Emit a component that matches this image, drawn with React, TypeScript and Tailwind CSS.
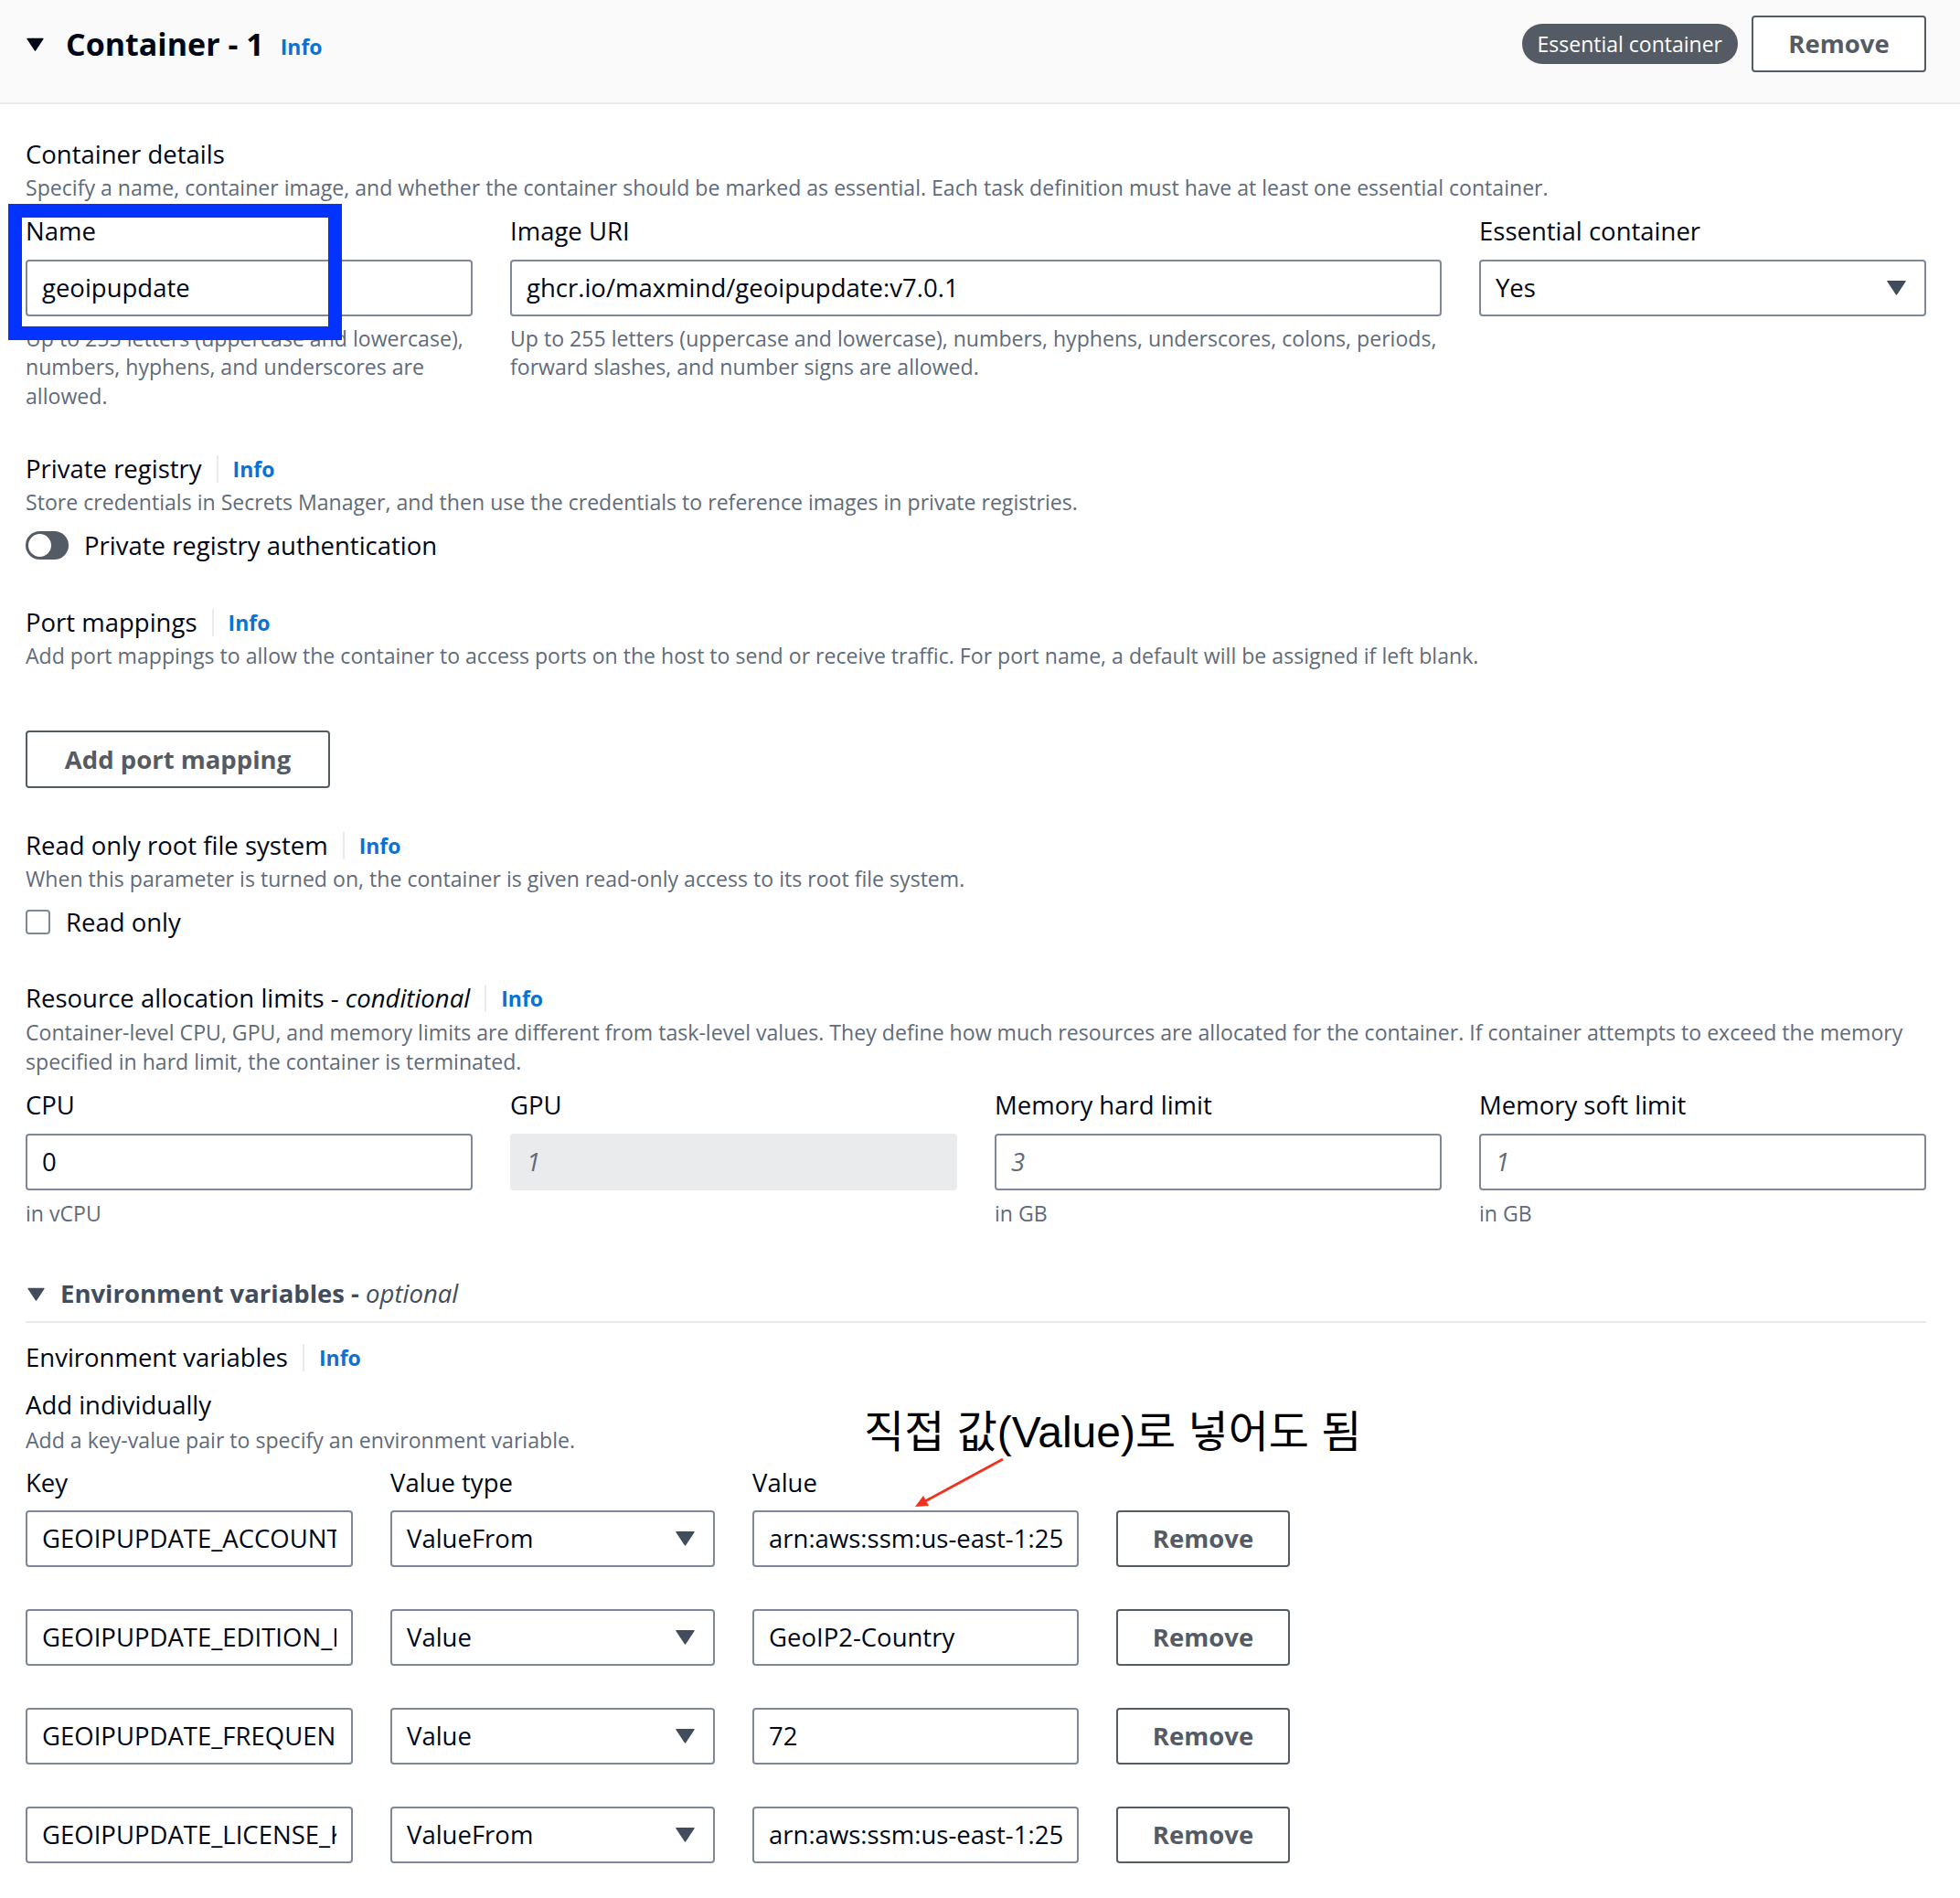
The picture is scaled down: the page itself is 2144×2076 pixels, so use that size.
import { ReactNode } from "react";

const FIELD =
  "h-[62px] w-full rounded-[4px] border-2 border-[#7d8998] bg-white px-[16px] text-[27.5px] text-[#000716] outline-none placeholder:italic placeholder:text-[#5f6b7a]";

const Caret = ({ className }: { className?: string }) => (
  <svg viewBox="0 0 20 16" className={className} fill="currentColor">
    <path d="M1 1.5h18L10 15z" strokeLinejoin="round" stroke="currentColor" strokeWidth="1.5" />
  </svg>
);

const Info = () => (
  <span className="text-[23px] font-bold leading-[42px] text-[#0972d3]">Info</span>
);

const Heading = ({ children, info }: { children: ReactNode; info?: boolean }) => (
  <div className="flex h-[42px] items-center">
    <span className="text-[27.5px] leading-[42px] text-[#000716]">{children}</span>
    {info && (
      <>
        <span className="mx-[16px] h-[30px] w-[2px] bg-[#e9ebed]" />
        <Info />
      </>
    )}
  </div>
);

const Desc = ({ children, className }: { children: ReactNode; className?: string }) => (
  <p className={`text-[23.1px] leading-[31.5px] text-[#5f6b7a] ${className ?? ""}`}>{children}</p>
);

const Label = ({ children }: { children: ReactNode }) => (
  <div className="text-[27.5px] leading-[42px] text-[#000716]">{children}</div>
);

const TextInput = ({
  value,
  placeholder,
  disabled,
}: {
  value?: string;
  placeholder?: string;
  disabled?: boolean;
}) => (
  <input
    readOnly
    value={value ?? ""}
    placeholder={placeholder}
    className={
      disabled
        ? "h-[62px] w-full rounded-[4px] border-2 border-[#e9ebed] bg-[#e9ebed] px-[16px] text-[27.5px] outline-none placeholder:italic placeholder:text-[#5f6b7a]"
        : FIELD
    }
  />
);

const Select = ({ value }: { value: string }) => (
  <div className="flex h-[62px] w-full items-center rounded-[4px] border-2 border-[#7d8998] bg-white pl-[16px] pr-[20px] text-[27.5px] text-[#000716]">
    <span className="flex-1">{value}</span>
    <Caret className="h-[17px] w-[21px] text-[#414d5c]" />
  </div>
);

const Button = ({ children, className }: { children: ReactNode; className?: string }) => (
  <button
    className={`flex h-[62px] items-center justify-center rounded-[4px] border-2 border-[#545b64] bg-white text-[27.5px] font-bold text-[#545b64] ${className ?? ""}`}
  >
    {children}
  </button>
);

const ENV = [
  {
    key: "GEOIPUPDATE_ACCOUNT_ID",
    type: "ValueFrom",
    value: "arn:aws:ssm:us-east-1:255000000000:parameter/geoipupdate/account-id",
  },
  { key: "GEOIPUPDATE_EDITION_IDS", type: "Value", value: "GeoIP2-Country" },
  { key: "GEOIPUPDATE_FREQUENCY", type: "Value", value: "72" },
  {
    key: "GEOIPUPDATE_LICENSE_KEY",
    type: "ValueFrom",
    value: "arn:aws:ssm:us-east-1:255000000000:parameter/geoipupdate/license-key",
  },
];

export default function App() {
  return (
    <div className="relative min-h-[2076px] w-[2144px] bg-white font-['Open_Sans',sans-serif] text-[#000716]">
      {/* container header */}
      <div className="h-[114px] border-b-2 border-[#e9ebed] bg-[#fafafa] pl-[29px] pr-[37px] pt-[17px]">
        <div className="flex h-[62px] items-center">
          <Caret className="h-[15px] w-[19px] text-[#000716]" />
          <span className="ml-[24px] text-[34px] font-bold leading-[44px]">Container - 1</span>
          <span className="ml-[18px] mt-[6px]">
            <Info />
          </span>
          <div className="ml-auto flex items-center gap-[15px]">
            <span className="flex h-[44px] items-center rounded-full bg-[#545b64] px-[17px] text-[23px] text-white">
              Essential container
            </span>
            <Button className="w-[191px]">Remove</Button>
          </div>
        </div>
      </div>

      <div className="pl-[28px] pr-[37px] pt-[34px]">
        {/* container details */}
        <Heading>Container details</Heading>
        <Desc>
          Specify a name, container image, and whether the container should be marked as
          essential. Each task definition must have at least one essential container.
        </Desc>
        <div className="mt-[10px] grid grid-cols-4 gap-x-[41px]">
          <div>
            <Label>Name</Label>
            <div className="mt-[10px]">
              <TextInput value="geoipupdate" />
            </div>
            <Desc className="mt-[9px]">
              Up to 255 letters (uppercase and lowercase), numbers, hyphens, and underscores are
              allowed.
            </Desc>
          </div>
          <div className="col-span-2">
            <Label>Image URI</Label>
            <div className="mt-[10px]">
              <TextInput value="ghcr.io/maxmind/geoipupdate:v7.0.1" />
            </div>
            <Desc className="mt-[9px]">
              Up to 255 letters (uppercase and lowercase), numbers, hyphens, underscores, colons,
              periods, forward slashes, and number signs are allowed.
            </Desc>
          </div>
          <div>
            <Label>Essential container</Label>
            <div className="mt-[10px]">
              <Select value="Yes" />
            </div>
          </div>
        </div>

        {/* private registry */}
        <div className="mt-[43px]">
          <Heading info>Private registry</Heading>
          <Desc>
            Store credentials in Secrets Manager, and then use the credentials to reference images
            in private registries.
          </Desc>
          <div className="mt-[10px] flex h-[42px] items-center">
            <span className="flex h-[31px] w-[47px] items-center rounded-full bg-[#545b64] p-[3px]">
              <span className="h-[25px] w-[25px] rounded-full bg-white" />
            </span>
            <span className="ml-[17px] text-[27.5px]">Private registry authentication</span>
          </div>
        </div>

        {/* port mappings */}
        <div className="mt-[42px]">
          <Heading info>Port mappings</Heading>
          <Desc>
            Add port mappings to allow the container to access ports on the host to send or
            receive traffic. For port name, a default will be assigned if left blank.
          </Desc>
          <Button className="mt-[66px] h-[63px] w-[333px]">Add port mapping</Button>
        </div>

        {/* read only */}
        <div className="mt-[42px]">
          <Heading info>Read only root file system</Heading>
          <Desc>
            When this parameter is turned on, the container is given read-only access to its root
            file system.
          </Desc>
          <div className="mt-[10px] flex h-[42px] items-center">
            <span className="h-[27px] w-[27px] rounded-[4px] border-2 border-[#7d8998]" />
            <span className="ml-[17px] text-[27.5px]">Read only</span>
          </div>
        </div>

        {/* resource limits */}
        <div className="mt-[41px]">
          <Heading info>
            Resource allocation limits - <i>conditional</i>
          </Heading>
          <p className="text-[23.1px] leading-[32.5px] text-[#5f6b7a]">
            Container-level CPU, GPU, and memory limits are different from task-level values. They
            define how much resources are allocated for the container. If container attempts to
            exceed the memory specified in hard limit, the container is terminated.
          </p>
          <div className="mt-[10px] grid grid-cols-4 gap-x-[41px]">
            <div>
              <Label>CPU</Label>
              <div className="mt-[10px]">
                <TextInput value="0" />
              </div>
              <Desc className="mt-[10px]">in vCPU</Desc>
            </div>
            <div>
              <Label>GPU</Label>
              <div className="mt-[10px]">
                <TextInput placeholder="1" disabled />
              </div>
            </div>
            <div>
              <Label>Memory hard limit</Label>
              <div className="mt-[10px]">
                <TextInput placeholder="3" />
              </div>
              <Desc className="mt-[10px]">in GB</Desc>
            </div>
            <div>
              <Label>Memory soft limit</Label>
              <div className="mt-[10px]">
                <TextInput placeholder="1" />
              </div>
              <Desc className="mt-[10px]">in GB</Desc>
            </div>
          </div>
        </div>

        {/* environment variables */}
        <div className="mt-[51px] flex h-[42px] items-center">
          <Caret className="ml-[2px] h-[15px] w-[19px] text-[#414d5c]" />
          <span className="ml-[17px] text-[27.5px] font-bold text-[#414d5c]">
            Environment variables - <i className="font-normal">optional</i>
          </span>
        </div>
        <div className="mt-[9px] h-[2px] bg-[#e9ebed]" />

        <div className="mt-[17px]">
          <Heading info>Environment variables</Heading>
        </div>
        <div className="mt-[10px]">
          <Label>Add individually</Label>
        </div>
        <Desc className="mt-[2px]">Add a key-value pair to specify an environment variable.</Desc>

        <div className="mt-[9px] grid grid-cols-[358px_355px_357px_190px] gap-x-[41px]">
          <Label>Key</Label>
          <Label>Value type</Label>
          <Label>Value</Label>
          <div />
        </div>
        <div className="mt-[9px] flex flex-col gap-y-[46px]">
          {ENV.map((row) => (
            <div key={row.key} className="grid grid-cols-[358px_355px_357px_190px] gap-x-[41px]">
              <TextInput value={row.key} />
              <Select value={row.type} />
              <TextInput value={row.value} />
              <Button>Remove</Button>
            </div>
          ))}
        </div>
      </div>

      {/* annotation */}
      <div className="absolute left-[9px] top-[223px] h-[149px] w-[365px] border-[15px] border-[#0433ff]" />
      <div className="absolute left-[945px] top-[1540px] whitespace-nowrap font-['Liberation_Sans','Noto_Sans_CJK_KR',sans-serif] text-[48px] leading-[54px] text-black">
        직접 값(Value)로 넣어도 됨
      </div>
      <svg className="pointer-events-none absolute left-0 top-0" width="2144" height="2076">
        <line x1="1097" y1="1596" x2="1012" y2="1642" stroke="#f2321f" strokeWidth="3" />
        <polygon points="1001,1648 1016,1647 1010,1636" fill="#f2321f" />
      </svg>
    </div>
  );
}
